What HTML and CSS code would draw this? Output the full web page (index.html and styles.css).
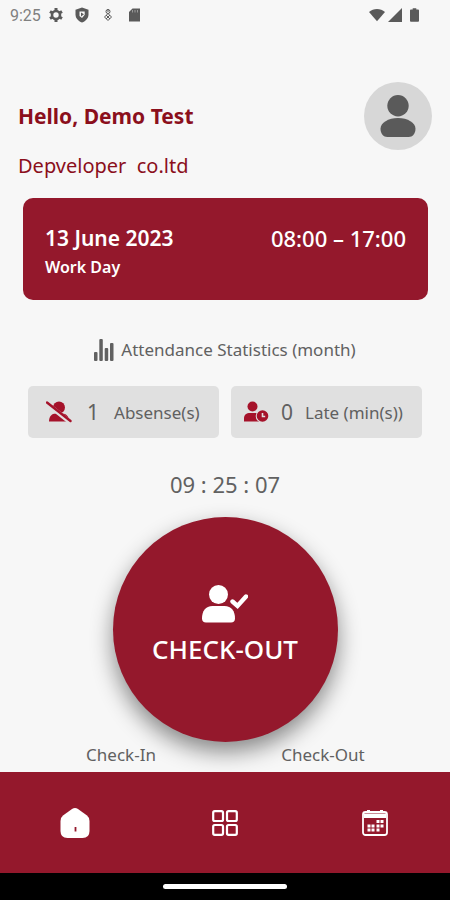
FILE: index.html
```html
<!DOCTYPE html>
<html lang="en">
  <head>
    <meta charset="utf-8">
    <meta name="viewport" content="width=device-width, initial-scale=1">
    <title>Attendance</title>
    <link rel="stylesheet" href="styles.css">
  </head>
  <body>
    <div class="statusBar">
      <span class="statusTime">9:25</span>
      <svg class="statusIcon" viewBox="0 0 16 16"><circle cx="8" cy="8" r="4" fill="none" stroke="currentColor" stroke-width="2.6"/><path d="M8 1v3M8 12v3M2 4.500l2.500 1.500M11.500 10l2.500 1.500M2 11.500l2.500-1.500M11.500 6l2.500-1.500" stroke="currentColor" stroke-width="3"/></svg>
      <svg class="statusIcon" viewBox="0 0 16 16"><path d="M8 .5l6.500 2.200v4.800c0 3.800-2.700 6.500-6.500 8-3.800-1.500-6.500-4.200-6.500-8V2.700z" fill="currentColor"/><path d="M5.500 4.500h5.200v3.300L8 11 5.500 9z" fill="#f7f7f7"/><path d="M7 5.500l3 1.700-3 2.300z" fill="currentColor"/></svg>
      <svg class="statusIcon" viewBox="0 0 16 16" fill="none" stroke="currentColor" stroke-width="1"><circle cx="8" cy="4.500" r="2"/><path d="M8 6.500l3.500 3.500L8 13.500 4.500 10zM6 8l4 4M10 8l-4 4M8 2v3"/></svg>
      <svg class="statusIcon" viewBox="0 0 16 16"><path d="M6.500 1.500H14v13H3V5z" fill="currentColor"/><path d="M6.500 3v2.500M9 3v2.500M11.500 3v2.500" stroke="#999" stroke-width="1"/></svg>
      <div class="statusRight">
        <svg class="wifi" viewBox="0 0 18 14"><path d="M0 3.500C5-1 13-1 18 3.500L9 14z" fill="currentColor"/></svg>
        <svg class="signal" viewBox="0 0 14 14"><path d="M14 0v14H0z" fill="currentColor"/></svg>
        <svg class="battery" viewBox="0 0 10 15"><path d="M3 0h4v1.500h2q1 0 1 1V14q0 1-1 1H1q-1 0-1-1V2.500q0-1 1-1h2z" fill="currentColor"/></svg>
      </div>
    </div>

    <main class="content">
      <header class="header">
        <div class="headerRow">
          <h1 class="userName">Hello, Demo Test</h1>
          <svg class="avatar" viewBox="0 0 70 70" role="img" aria-label="Profile"><circle cx="35" cy="35" r="35" fill="#d7d7d7"/><circle cx="35" cy="24.500" r="11" fill="#5a5a5a"/><path d="M17 48c0-6 8-11 18-11s18 5 18 11c0 5-3 8.500-7 8.500H24c-4 0-7-3.500-7-8.500z" fill="#5a5a5a"/></svg>
        </div>
        <p class="company">Depveloper&nbsp; co.ltd</p>
      </header>

      <section class="dayCard">
        <div class="dayRow">
          <span class="dayDate">13 June 2023</span>
          <span class="dayHours">08:00 – 17:00</span>
        </div>
        <div class="dayType">Work Day</div>
      </section>

      <section>
        <h2 class="statsTitle">
          <svg class="chartIcon" viewBox="0 0 20 22" fill="currentColor"><rect x="0" y="13" width="3.500" height="9" rx="1"/><rect x="5.300" y="0" width="3.500" height="22" rx="1"/><rect x="10.700" y="9" width="3.500" height="13" rx="1"/><rect x="16" y="4" width="3.500" height="18" rx="1"/></svg>
          Attendance Statistics (month)
        </h2>
        <div class="stats">
          <div class="stat absent">
            <svg class="statIcon" viewBox="0 0 26 22"><circle cx="13" cy="6.500" r="6" fill="currentColor"/><path d="M3 20.500c0-5 2.500-8 7-8h6c4.500 0 7 3 7 8z" fill="currentColor"/><path d="M.5 2.500L24 21" stroke="#e0e0e0" stroke-width="4.600"/><path d="M1 1.500l23.500 18.500" stroke="currentColor" stroke-width="2.400" stroke-linecap="round"/></svg>
            <span class="statCount">1</span>
            <span>Absense(s)</span>
          </div>
          <div class="stat late">
            <svg class="statIcon" viewBox="0 0 26 22"><circle cx="9.500" cy="5.500" r="5" fill="currentColor"/><path d="M1 20.500v-3c0-4 2.500-5.500 6-5.500h5c3 0 5 1 5 4v4.500z" fill="currentColor"/><circle cx="19.500" cy="15" r="6.800" fill="#e0e0e0"/><circle cx="19.500" cy="15" r="5.800" fill="currentColor"/><path d="M19.500 12v3.500h2.700" fill="none" stroke="#e0e0e0" stroke-width="1.600"/></svg>
            <span class="statCount">0</span>
            <span>Late (min(s))</span>
          </div>
        </div>
      </section>

      <div class="clock">09 : 25 : 07</div>
      <button class="checkButton" type="button">
        <svg class="checkIcon" viewBox="0 0 46 38"><circle cx="16.500" cy="9.500" r="9.500" fill="#fff"/><path d="M0 33.500c0-7.500 3.500-12.500 10.500-12.500h12c7 0 10.500 5 10.500 12.500 0 2.500-1.500 4-4 4H4c-2.500 0-4-1.500-4-4z" fill="#fff"/><path d="M30.500 16.500l5 4.500 8.500-9.500" fill="none" stroke="#fff" stroke-width="4.400" stroke-linecap="round"/></svg>
        CHECK-OUT
      </button>
      <div class="checkLabels">
        <span>Check-In</span>
        <span>Check-Out</span>
      </div>
    </main>

    <nav class="bottomNav">
      <a class="navLink" href="#" aria-label="Home"><svg class="navIcon" viewBox="0 0 30 30"><path d="M12 1q3-2 6 0l9 6.500q2.500 2 2.500 5.500v10q0 7-7 7h-15q-7 0-7-7V13q0-3.500 2.500-5.500z" fill="#fff"/><path d="M15.500 19v4.500" stroke="#94182c" stroke-width="1.800"/></svg></a>
      <a class="navLink" href="#" aria-label="Menu"><svg class="navIcon small" viewBox="0 0 26 26" fill="none" stroke="#fff" stroke-width="2.200"><rect x="1.200" y="1.200" width="9.800" height="9.800" rx="1.500"/><rect x="15" y="1.200" width="9.800" height="9.800" rx="1.500"/><rect x="1.200" y="15" width="9.800" height="9.800" rx="1.500"/><rect x="15" y="15" width="9.800" height="9.800" rx="1.500"/></svg></a>
      <a class="navLink" href="#" aria-label="Calendar"><svg class="navIcon small" viewBox="0 0 26 26"><rect x="1" y="2" width="24" height="23" rx="2.500" fill="none" stroke="#fff" stroke-width="1.800"/><path d="M2 3.500h22V8H2zM5 0h3v3H5zM18 0h3v3h-3z" fill="#fff"/><path d="M14.500 10h3v3h-3zM18.500 10h3v3h-3zM5.500 14.500h3v3h-3zM9.500 14.500h3v3h-3zM14.500 14.500h3v3h-3zM18.500 14.500h3v3h-3zM5.500 18.500h3v3h-3zM9.500 18.500h3v3h-3zM14.500 18.500h3v3h-3z" fill="#fff"/></svg></a>
    </nav>
    <div class="gestureBar"><div class="gestureHandle"></div></div>
  </body>
</html>
```
FILE: styles.css
```css
* {
	box-sizing: border-box;
}

body {
	margin: 0;
	min-height: 100vh;
	display: flex;
	flex-direction: column;
	background-color: #f7f7f7;
	color: #616161;
	font-family: "Noto Sans", sans-serif;
}

h1, h2, p {
	margin: 0;
}

svg {
	display: block;
	flex: none;
}

.statusBar {
	height: 30px;
	padding: 0 31px 0 10px;
	display: flex;
	align-items: center;
	gap: 10px;
	color: #5a5a5a;
}

.statusTime {
	margin-right: -3px;
	font-family: Roboto, sans-serif;
	font-size: 16px;
	color: #808080;
}

.statusIcon {
	width: 16px;
	height: 16px;
}

.statusRight {
	margin-left: auto;
	display: flex;
	align-items: center;
	gap: 3px;
}

.wifi {
	width: 16px;
	height: 14px;
}

.signal {
	width: 14px;
	height: 14px;
}

.battery {
	width: 9px;
	height: 14px;
	margin-left: 5px;
}

.content {
	flex: 1;
	position: relative;
}

.header {
	padding: 52px 18px 0;
	color: #8b0f1c;
}

.headerRow {
	display: flex;
	align-items: center;
	justify-content: space-between;
}

.userName {
	font-size: 21px;
	line-height: 26px;
}

.avatar {
	width: 68px;
	height: 68px;
}

.company {
	margin-top: 4px;
	font-size: 20px;
	line-height: 24px;
}

.dayCard {
	margin: 20px 22px 0 23px;
	padding: 24px 22px 20px;
	border-radius: 10px;
	background-color: #94182c;
	color: #fff;
}

.dayRow {
	display: flex;
	justify-content: space-between;
	font-size: 22px;
	line-height: 32px;
}

.dayDate {
	font-size: 21px;
	font-weight: 600;
}

.dayHours {
	font-weight: 500;
}

.dayType {
	font-size: 16px;
	font-weight: 600;
	line-height: 26px;
}

.statsTitle {
	margin-top: 36px;
	display: flex;
	justify-content: center;
	align-items: center;
	gap: 7px;
	font-size: 17px;
	font-weight: 400;
	line-height: 28px;
}

.chartIcon {
	width: 20px;
	height: 22px;
}

.stats {
	margin: 22px 28px 0;
	display: grid;
	grid-template-columns: 1fr 1fr;
	gap: 12px;
}

.stat {
	height: 52px;
	display: flex;
	align-items: center;
	border-radius: 5px;
	background-color: #e0e0e0;
	font-size: 17px;
	white-space: nowrap;
}

.absent {
	padding-left: 18px;
	gap: 15px;
}

.late {
	padding-left: 12px;
	gap: 12px;
}

.statIcon {
	width: 26px;
	height: 22px;
	color: #a5122a;
}

.statCount {
	font-size: 21px;
}

.clock {
	margin-top: 30px;
	text-align: center;
	font-size: 22px;
	line-height: 32px;
}

.checkButton {
	width: 225px;
	height: 225px;
	margin: 17px auto 0;
	padding: 0 0 10px;
	display: flex;
	flex-direction: column;
	align-items: center;
	justify-content: center;
	gap: 10px;
	border: 0;
	border-radius: 50%;
	background-color: #94182c;
	box-shadow: 0 10px 22px rgba(0, 0, 0, 0.45);
	color: #fff;
	font-family: inherit;
	font-size: 26px;
	font-weight: 500;
	line-height: 32px;
	cursor: pointer;
}

.checkIcon {
	width: 46px;
	height: 38px;
}

.checkLabels {
	position: relative;
	margin-top: 3px;
	padding: 0 26px 7px 20px;
	display: grid;
	grid-template-columns: 1fr 1fr;
	text-align: center;
	font-size: 17px;
	line-height: 20px;
}

.bottomNav {
	position: relative;
	height: 101px;
	display: grid;
	grid-template-columns: 1fr 1fr 1fr;
	background-color: #94182c;
}

.navLink {
	display: flex;
	align-items: center;
	justify-content: center;
}

.navIcon {
	width: 30px;
	height: 30px;
}

.navIcon.small {
	width: 26px;
	height: 26px;
}

.gestureBar {
	height: 27px;
	display: flex;
	align-items: center;
	justify-content: center;
	background-color: #000;
}

.gestureHandle {
	width: 124px;
	height: 5px;
	border-radius: 3px;
	background-color: #fff;
}
```
